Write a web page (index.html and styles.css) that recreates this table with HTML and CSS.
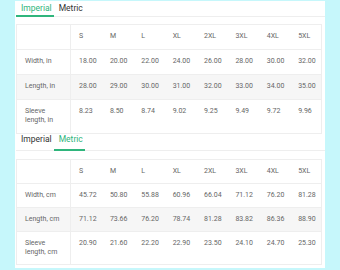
FILE: index.html
```html
<!DOCTYPE html>
<html lang="en">
<head>
    <meta charset="UTF-8">
    <title>Size chart</title>
    <link rel="stylesheet" href="styles.css">
</head>
<body>
    <div class="panel">
        <div class="size-block">
            <div class="tabs">
                <span class="tab active">Imperial</span>
                <span class="tab">Metric</span>
            </div>
            <table class="size-table">
                <tr>
                    <th class="label"></th>
                    <th>S</th><th>M</th><th>L</th><th>XL</th><th>2XL</th><th>3XL</th><th>4XL</th><th>5XL</th>
                </tr>
                <tr>
                    <td class="label">Width, in</td>
                    <td>18.00</td><td>20.00</td><td>22.00</td><td>24.00</td><td>26.00</td><td>28.00</td><td>30.00</td><td>32.00</td>
                </tr>
                <tr class="shaded">
                    <td class="label">Length, in</td>
                    <td>28.00</td><td>29.00</td><td>30.00</td><td>31.00</td><td>32.00</td><td>33.00</td><td>34.00</td><td>35.00</td>
                </tr>
                <tr>
                    <td class="label">Sleeve<br>length, in</td>
                    <td>8.23</td><td>8.50</td><td>8.74</td><td>9.02</td><td>9.25</td><td>9.49</td><td>9.72</td><td>9.96</td>
                </tr>
            </table>
        </div>

        <div class="size-block second">
            <div class="tabs">
                <span class="tab">Imperial</span>
                <span class="tab active">Metric</span>
            </div>
            <table class="size-table compact">
                <tr>
                    <th class="label"></th>
                    <th>S</th><th>M</th><th>L</th><th>XL</th><th>2XL</th><th>3XL</th><th>4XL</th><th>5XL</th>
                </tr>
                <tr>
                    <td class="label">Width, cm</td>
                    <td>45.72</td><td>50.80</td><td>55.88</td><td>60.96</td><td>66.04</td><td>71.12</td><td>76.20</td><td>81.28</td>
                </tr>
                <tr class="shaded">
                    <td class="label">Length, cm</td>
                    <td>71.12</td><td>73.66</td><td>76.20</td><td>78.74</td><td>81.28</td><td>83.82</td><td>86.36</td><td>88.90</td>
                </tr>
                <tr>
                    <td class="label">Sleeve<br>length, cm</td>
                    <td>20.90</td><td>21.60</td><td>22.20</td><td>22.90</td><td>23.50</td><td>24.10</td><td>24.70</td><td>25.30</td>
                </tr>
            </table>
        </div>
    </div>
</body>
</html>
```

FILE: styles.css
```css
body {
    margin: 0;
    background-color: #c6f7fb;
    font-family: Roboto, "Liberation Sans", sans-serif;
    color: #666666;
}

.panel {
    width: 309px;
    margin: 1px 0 0 15px;
    padding: 0 0 3px 1px;
    background-color: #ffffff;
}

.tabs {
    display: flex;
    height: 15px;
    border-bottom: 1px solid #eeeeee;
}

.tab {
    padding: 0 2px 0 5px;
    font-size: 8.5px;
    line-height: 14px;
    color: #333333;
}

.tab.active {
    color: #2fb57c; /* green active tab */
    border-bottom: 2px solid #2fb57c;
    margin-bottom: -1px;
}

.size-block.second .tabs {
    height: 16px;
}

.size-block.second .tab {
    line-height: 10px;
}

.size-table {
    width: 306px;
    margin-top: 7px;
    border-collapse: collapse;
    border: 1px solid #eeeeee;
    table-layout: fixed;
}

.size-table th,
.size-table td {
    padding: 7px 0 8px 8px;
    font-size: 7px;
    font-weight: normal;
    line-height: 9px;
    text-align: left;
    vertical-align: top;
    border-bottom: 1px solid #eeeeee;
    color: #666666;
}

.size-table .label {
    width: 45px;
    border-right: 1px solid #eeeeee;
}

.size-table .shaded td {
    background-color: #f6f6f6;
}

.size-table.compact {
    margin-top: 8px;
}

.size-table.compact th,
.size-table.compact td {
    padding-bottom: 7px;
}
```
